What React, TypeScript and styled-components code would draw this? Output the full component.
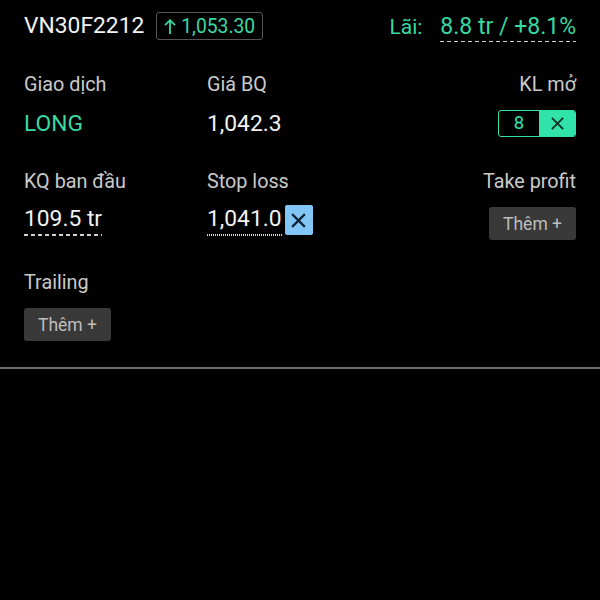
import React from "react";
import styled, { createGlobalStyle } from "styled-components";

const GREEN = "#38d9a0";
const MINT = "#30e3a8";

const Global = createGlobalStyle`
  html, body { margin: 0; padding: 0; background: #000; }
  body { font-family: Roboto, "Noto Sans", Arial, sans-serif; }
`;

const Page = styled.div`
  width: 600px;
  height: 600px;
  background: #000;
  color: #f2f2f2;
  overflow: hidden;
`;

const Header = styled.div`
  display: flex;
  align-items: center;
  justify-content: space-between;
  padding: 12px 24px 0;
  height: 28px;
`;

const TitleGroup = styled.div`
  display: flex;
  align-items: center;
  gap: 12px;
`;

const Title = styled.span`
  font-size: 22.8px;
  line-height: 26px;
  color: #f2f2f2;
`;

const PriceBadge = styled.div`
  display: flex;
  align-items: center;
  gap: 5px;
  height: 26px;
  padding: 0 7px;
  border: 1px solid #555;
  border-radius: 3px;
  color: ${GREEN};
  font-size: 19.3px;
`;

const Profit = styled.div`
  display: flex;
  align-items: baseline;
  gap: 18px;
  font-size: 21px;
  color: ${GREEN};
  margin-top: 1px;
`;

const ProfitValue = styled.span`
  font-size: 23px;
`;

const Dashed = styled.span<{ $dot?: boolean; $tight?: boolean }>`
  padding-bottom: ${(p) => (p.$tight ? "2px" : "4px")};
  background-image: ${(p) =>
    p.$dot
      ? "linear-gradient(to right, #d0d0d0 50%, transparent 50%)"
      : "linear-gradient(to right, #d0d0d0 60%, transparent 60%)"};
  background-size: ${(p) => (p.$dot ? "2px 1.5px" : "7px 1.5px")};
  background-repeat: repeat-x;
  background-position: left bottom;
`;

const Grid = styled.div`
  display: grid;
  grid-template-columns: 183px 1fr auto;
  row-gap: 32px;
  padding: 34px 24px 0;
`;

const Cell = styled.div<{ $right?: boolean }>`
  display: flex;
  flex-direction: column;
  align-items: ${(p) => (p.$right ? "flex-end" : "flex-start")};
  gap: 11px;
`;

const Label = styled.div`
  font-size: 19.8px;
  line-height: 22px;
  color: #cacaca;
`;

const Value = styled.div<{ $green?: boolean }>`
  display: flex;
  align-items: center;
  height: 32px;
  font-size: 22.8px;
  color: ${(p) => (p.$green ? GREEN : "#f2f2f2")};
`;

const QtyBox = styled.div`
  display: flex;
  height: 27px;
  border: 1.5px solid ${MINT};
  border-radius: 3px;
  overflow: hidden;
  box-sizing: border-box;
`;

const QtyNum = styled.div`
  width: 40px;
  display: flex;
  align-items: center;
  justify-content: center;
  color: ${MINT};
  font-size: 18.5px;
`;

const QtyClear = styled.div`
  width: 36px;
  background: ${MINT};
  display: flex;
  align-items: center;
  justify-content: center;
`;

const BlueClear = styled.div`
  width: 28px;
  height: 30px;
  margin-left: 3px;
  background: #82c6f6;
  border-radius: 2px;
  display: flex;
  align-items: center;
  justify-content: center;
`;

const AddButton = styled.button`
  margin-top: 3px;
  height: 33px;
  padding: 0 14px;
  border: none;
  border-radius: 3px;
  background: #393939;
  color: #bdbdbd;
  font-family: inherit;
  font-size: 17.5px;
  display: flex;
  align-items: center;
  gap: 3px;
`;

const Divider = styled.div`
  margin-top: 26px;
  height: 2px;
  background: #6e6e6e;
`;

const Cross = ({ size, color, w }: { size: number; color: string; w: number }) => (
  <svg width={size} height={size} viewBox="0 0 16 16">
    <path d="M2 2L14 14M14 2L2 14" stroke={color} strokeWidth={w} strokeLinecap="butt" fill="none" />
  </svg>
);

const UpArrow = () => (
  <svg width="12" height="15" viewBox="0 0 12 15">
    <path d="M6 1.2V15M1 6.2L6 1.2L11 6.2" stroke={GREEN} strokeWidth="1.8" fill="none" />
  </svg>
);

export default function App() {
  return (
    <Page>
      <Global />
      <Header>
        <TitleGroup>
          <Title>VN30F2212</Title>
          <PriceBadge>
            <UpArrow />
            <span>1,053.30</span>
          </PriceBadge>
        </TitleGroup>
        <Profit>
          <span>Lãi:</span>
          <ProfitValue>
            <Dashed $tight>8.8 tr / +8.1%</Dashed>
          </ProfitValue>
        </Profit>
      </Header>
      <Grid>
        <Cell>
          <Label>Giao dịch</Label>
          <Value $green>LONG</Value>
        </Cell>
        <Cell>
          <Label>Giá BQ</Label>
          <Value>1,042.3</Value>
        </Cell>
        <Cell $right>
          <Label>KL mở</Label>
          <Value>
            <QtyBox>
              <QtyNum>8</QtyNum>
              <QtyClear>
                <Cross size={15} color="#0b3326" w={2} />
              </QtyClear>
            </QtyBox>
          </Value>
        </Cell>

        <Cell>
          <Label>KQ ban đầu</Label>
          <Value>
            <Dashed>109.5 tr</Dashed>
          </Value>
        </Cell>
        <Cell>
          <Label>Stop loss</Label>
          <Value>
            <Dashed $dot>1,041.0</Dashed>
            <BlueClear>
              <Cross size={17} color="#0d2236" w={2} />
            </BlueClear>
          </Value>
        </Cell>
        <Cell $right>
          <Label>Take profit</Label>
          <AddButton>Thêm +</AddButton>
        </Cell>

        <Cell>
          <Label>Trailing</Label>
          <AddButton>Thêm +</AddButton>
        </Cell>
      </Grid>
      <Divider />
    </Page>
  );
}
